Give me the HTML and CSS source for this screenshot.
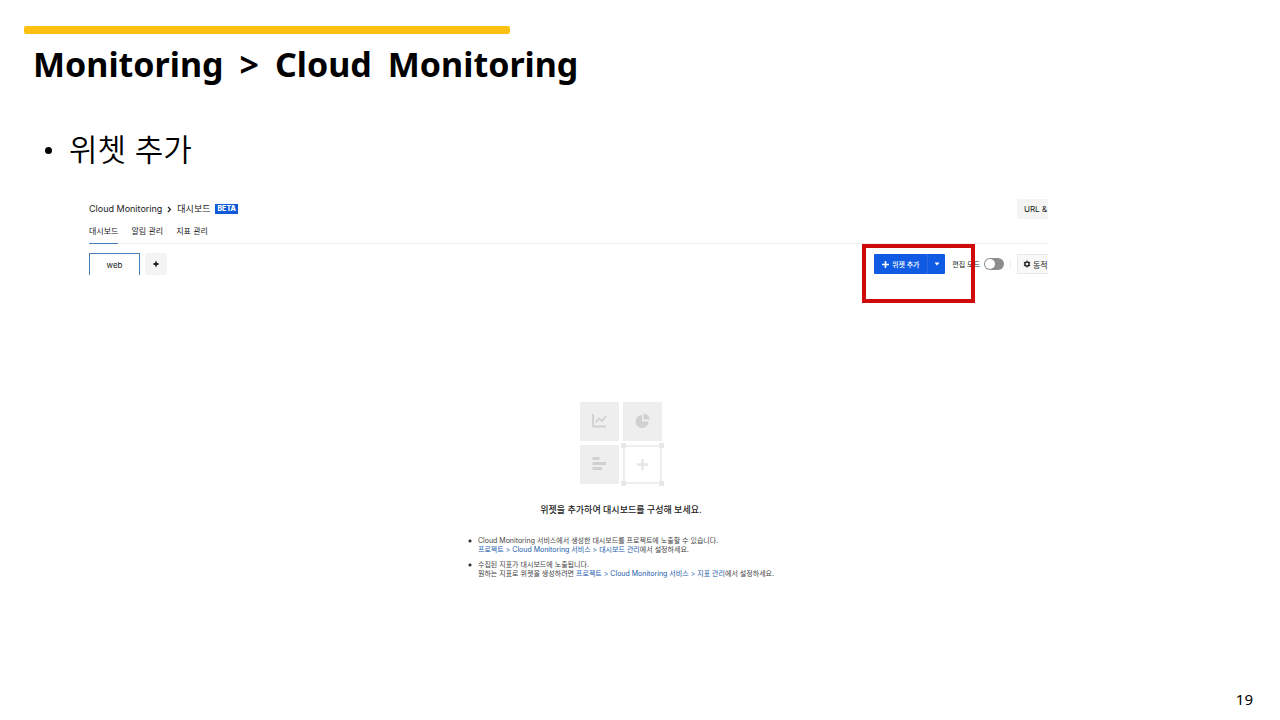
FILE: index.html
```html
<!DOCTYPE html>
<html lang="ko">
<head>
    <meta charset="UTF-8">
    <meta name="viewport" content="width=device-width, initial-scale=1.0">
    <title>Monitoring &gt; Cloud Monitoring</title>
    <link rel="stylesheet" href="styles.css">
</head>
<body>
    <main class="slide">
        <header class="slide-header">
            <div class="accent"></div>
            <h1><span>Monitoring</span> <span>&gt;</span> <span>Cloud</span> <span>Monitoring</span></h1>
        </header>

        <ul class="topics">
            <li>위쳇 추가</li>
        </ul>

        <section class="console">
            <div class="console-head">
                <nav class="breadcrumb">
                    <span>Cloud Monitoring</span>
                    <svg width="5" height="7" viewBox="0 0 5 7"><path d="M1 1l2.5 2.5L1 6" fill="none" stroke="#222" stroke-width="1.2"/></svg>
                    <span>대시보드</span>
                    <span class="beta">BETA</span>
                </nav>
                <button class="side-button url-button">URL &amp;</button>
            </div>

            <nav class="menu">
                <a href="#" class="active">대시보드</a>
                <a href="#">알림 관리</a>
                <a href="#">지표 관리</a>
            </nav>

            <div class="toolbar">
                <button class="board-tab">web</button>
                <button class="board-add" aria-label="대시보드 추가">
                    <svg width="6" height="6" viewBox="0 0 6 6"><path d="M3 .5v5M.5 3h5" stroke="#222" stroke-width="1.8"/></svg>
                </button>

                <div class="widget-group">
                    <button class="widget-add">
                        <svg width="7" height="7" viewBox="0 0 7 7"><path d="M3.5 0v7M0 3.5h7" stroke="#fff" stroke-width="1.6"/></svg>
                        위젯 추가
                    </button>
                    <button class="widget-more" aria-label="더 보기">
                        <svg width="6" height="4" viewBox="0 0 6 4"><path d="M0.5 0.5h5L3 3.6z" fill="#fff"/></svg>
                    </button>
                    <div class="highlight"></div>
                </div>

                <label class="edit-label" for="editMode">편집 모드</label>
                <input type="checkbox" class="toggle" id="editMode">
                <span class="divider"></span>
                <button class="side-button dynamic-button">
                    <svg width="8" height="8" viewBox="0 0 8 8"><circle cx="4" cy="4" r="2.1" fill="none" stroke="#222" stroke-width="1.5"/><path d="M4 .4v1.2M4 6.4v1.2M.9 2.2l1 .6M6.1 5.2l1 .6M.9 5.8l1-.6M6.1 2.8l1-.6" stroke="#222" stroke-width="1.2"/></svg>
                    동적
                </button>
            </div>

            <div class="empty">
                <svg class="empty-icon" width="86" height="86" viewBox="0 0 86 86">
                    <g fill="#eee">
                        <rect x="2" y="2" width="39" height="39"/>
                        <rect x="45" y="2" width="39" height="39"/>
                        <rect x="2" y="45" width="39" height="39"/>
                    </g>
                    <!-- line chart -->
                    <path d="M15 14v12.5H28" fill="none" stroke="#d0d0d0" stroke-width="1.8"/>
                    <path d="M17.5 22.5l3.500-4 3 2.500 4-5" fill="none" stroke="#d0d0d0" stroke-width="1.8"/>
                    <!-- pie chart -->
                    <path d="M64 15v6.5h6.5A6.5 6.5 0 1 1 64 15z" fill="#d0d0d0"/>
                    <path d="M65.5 13.5a6 6 0 0 1 6 6h-6z" fill="#d0d0d0"/>
                    <!-- bar chart -->
                    <path d="M14.5 58.5h7M14.5 63.5h13.5M14.5 68.5h9.5" stroke="#d0d0d0" stroke-width="3"/>
                    <!-- new widget slot -->
                    <rect x="46" y="46" width="37" height="37" fill="#fff" stroke="#eee" stroke-width="2"/>
                    <path d="M43 43h5v5h-5zM81 43h5v5h-5zM43 81h5v5h-5zM81 81h5v5h-5z" fill="#e8e8e8"/>
                    <path d="M64.5 59v11M59 64.5h11" stroke="#e6e6e6" stroke-width="2.4"/>
                </svg>
                <h2>위젯을 추가하여 대시보드를 구성해 보세요.</h2>
                <ul class="guide">
                    <li>Cloud Monitoring 서비스에서 생성한 대시보드를 프로젝트에 노출할 수 있습니다.<br>
                        <a href="#">프로젝트 &gt; Cloud Monitoring 서비스 &gt; 대시보드 관리</a>에서 설정하세요.</li>
                    <li>수집된 지표가 대시보드에 노출됩니다.<br>
                        원하는 지표로 위젯을 생성하려면 <a href="#">프로젝트 &gt; Cloud Monitoring 서비스 &gt; 지표 관리</a>에서 설정하세요.</li>
                </ul>
            </div>
        </section>

        <footer class="page-number">19</footer>
    </main>
</body>
</html>
```
FILE: styles.css
```css
* {
    box-sizing: border-box;
}
body {
    margin: 0;
    background-color: #fff;
    color: #000;
    font-family: "Noto Sans", "Noto Sans CJK KR", sans-serif;
}
button {
    margin: 0;
    padding: 0;
    border: none;
    font: inherit;
    color: inherit;
    cursor: pointer;
}
a {
    color: inherit;
    text-decoration: none;
}
svg {
    flex: none;
}
.slide {
    display: flex;
    flex-direction: column;
    min-height: 100vh;
}
.slide-header {
    padding: 26px 24px 0;
}
.accent {
    width: 486px;
    max-width: 100%;
    height: 8px;
    border-radius: 2px;
    background-color: #fdc010;
}
h1 {
    display: flex;
    flex-wrap: wrap;
    gap: 0 16px;
    margin: 5px 0 0 9px;
    font-size: 34px;
    line-height: 50px;
    font-weight: 700;
}
.topics {
    margin: 37px 0 0;
    padding-left: 69px;
    font-family: "Noto Sans CJK KR", sans-serif;
    font-size: 31px;
    line-height: 44px;
    font-weight: 350;
    list-style: none;
}
.topics li {
    display: flex;
    align-items: center;
}
.topics li::before {
    content: "";
    width: 7px;
    height: 7px;
    margin: 4px 17px 0 -24px;
    border-radius: 50%;
    background-color: #000;
}

/* console */
.console {
    margin: 29px 232px 0 89px;
    overflow: hidden;
    color: #222;
    font-family: Inter, "Noto Sans CJK KR", sans-serif;
    font-size: 8px;
}
.console-head {
    display: flex;
    justify-content: space-between;
    align-items: center;
}
.breadcrumb {
    display: flex;
    align-items: center;
    gap: 5px;
    font-size: 9px;
    line-height: 12px;
    font-weight: 400;
}
.beta {
    padding: 0 2px;
    background-color: #1059d8;
    color: #fff;
    font-size: 7px;
    line-height: 10px;
    font-weight: 800;
}
.side-button {
    display: flex;
    align-items: center;
    width: 31px;
    height: 20px;
    background-color: #f4f4f4;
    white-space: nowrap;
}
.url-button {
    padding-left: 7px;
}
.menu {
    display: flex;
    gap: 13px;
    border-bottom: 1px solid #eee;
}
.menu a {
    height: 25px;
    margin-bottom: -1px;
    line-height: 25px;
    border-bottom: 1px solid transparent;
}
.menu a.active {
    border-bottom-color: #4a7db5;
}
.toolbar {
    display: flex;
    align-items: center;
    padding-top: 9px;
    height: 31px;
}
.board-tab {
    width: 51px;
    height: 22px;
    border: 1px solid #4a7db5;
    border-bottom: none;
    background-color: #fff;
}
.board-add {
    display: flex;
    align-items: center;
    justify-content: center;
    width: 22px;
    height: 22px;
    margin-left: 5px;
    background-color: #f4f4f4;
}
.widget-group {
    position: relative;
    display: flex;
    height: 20px;
    margin-left: auto;
    color: #fff;
    font-size: 7px;
    font-weight: 500;
}
.widget-group button {
    display: flex;
    align-items: center;
    justify-content: center;
    gap: 3px;
    background-color: #0f5be3;
    white-space: nowrap;
}
.widget-add {
    width: 53px;
    border-radius: 1px 0 0 1px;
}
.widget-group .widget-more {
    width: 18px;
    border-left: 1px solid #2a6ae0;
    border-radius: 0 1px 1px 0;
}
.highlight {
    position: absolute;
    top: -10px;
    right: -30px;
    bottom: -29px;
    left: -12px;
    border: 4px solid #cf0a0a;
    pointer-events: none;
}
.edit-label {
    margin-left: 7px;
    font-size: 7px;
}
.toggle {
    appearance: none;
    display: flex;
    width: 20px;
    height: 12px;
    margin: 0 0 0 4px;
    padding: 1px;
    border-radius: 6px;
    background-color: #8c8c8c;
}
.toggle::before {
    content: "";
    width: 10px;
    height: 10px;
    border-radius: 50%;
    background-color: #fff;
}
.toggle:checked {
    justify-content: flex-end;
    background-color: #0f5be3;
}
.divider {
    width: 1px;
    height: 9px;
    margin: 0 6px;
    background-color: #eee;
}
.dynamic-button {
    gap: 2px;
    padding-left: 5px;
    border: 1px solid #e8e8e8;
    border-right: none;
    background-color: #f8f8f8;
}

/* empty state */
.empty {
    display: flex;
    flex-direction: column;
    align-items: center;
    padding: 125px 0 0 105px;
}
h2 {
    margin: 17px 0 0;
    font-size: 9px;
    line-height: 14px;
    font-weight: 500;
}
.guide {
    margin: 19px 0 0;
    padding: 0;
    color: #444;
    font-size: 7px;
    line-height: 9px;
    list-style: none;
}
.guide li {
    padding-left: 10px;
    background: radial-gradient(circle at 2px 5px, #333 1px, transparent 2px) no-repeat;
}
.guide li + li {
    margin-top: 6px;
}
.guide a {
    color: #1a5aa8;
}
.page-number {
    margin-top: auto;
    padding: 0 27px 10px 0;
    font-size: 15px;
    line-height: 22px;
    text-align: right;
}
```
